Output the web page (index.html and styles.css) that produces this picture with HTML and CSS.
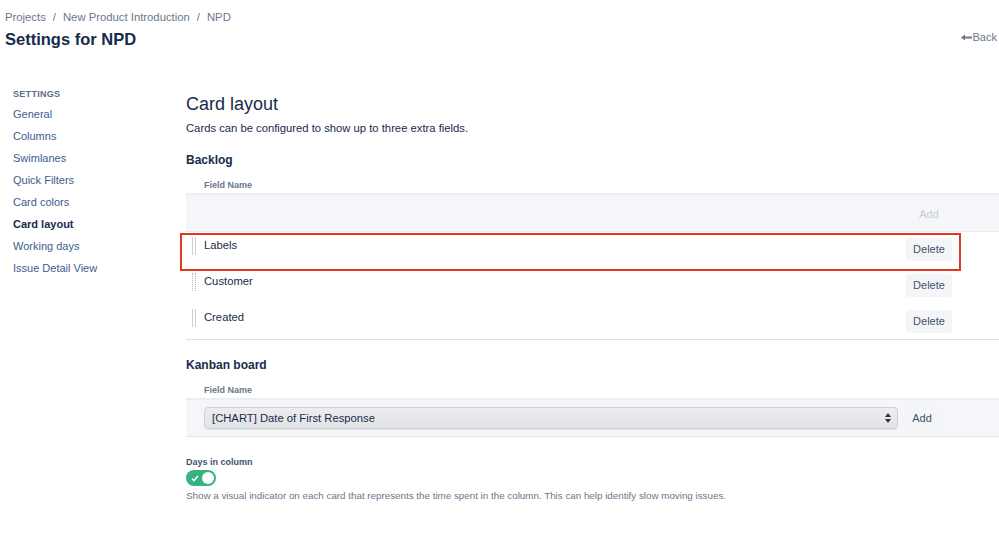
FILE: index.html
```html
<!DOCTYPE html>
<html>
<head>
<meta charset="utf-8">
<link rel="stylesheet" href="styles.css">
</head>
<body>
<header class="page-header">
  <div class="header-left">
    <nav class="breadcrumbs">
      <a>Projects</a><span class="sep">/</span><a>New Product Introduction</a><span class="sep">/</span><a>NPD</a>
    </nav>
    <h1 class="page-title">Settings for NPD</h1>
  </div>
  <a class="back-link">
    <svg width="11" height="7" viewBox="0 0 11 7"><path d="M0 3.5 L4 0.5 L4 2.5 L11 2.5 L11 4.5 L4 4.5 L4 6.5 Z" fill="#6b778c"/></svg>Back</a>
</header>
<div class="layout">
  <aside class="sidebar">
    <div class="sidebar-title">SETTINGS</div>
    <a class="side-link">General</a>
    <a class="side-link">Columns</a>
    <a class="side-link">Swimlanes</a>
    <a class="side-link">Quick Filters</a>
    <a class="side-link">Card colors</a>
    <a class="side-link active">Card layout</a>
    <a class="side-link">Working days</a>
    <a class="side-link">Issue Detail View</a>
  </aside>
  <main class="main">
    <h2 class="section-title">Card layout</h2>
    <p class="intro">Cards can be configured to show up to three extra fields.</p>

    <h3 class="sub-title">Backlog</h3>
    <div class="field-table">
      <div class="th-row"><span class="th">Field Name</span></div>
      <div class="add-row">
        <div class="cell-name"></div>
        <div class="cell-action"><span class="btn-disabled">Add</span></div>
      </div>
      <div class="field-row highlighted">
        <div class="cell-name"><span class="handle"></span>Labels</div>
        <div class="cell-action"><button class="btn">Delete</button></div>
        <div class="annotation"></div>
      </div>
      <div class="field-row">
        <div class="cell-name"><span class="handle dotted"></span>Customer</div>
        <div class="cell-action"><button class="btn">Delete</button></div>
      </div>
      <div class="field-row last">
        <div class="cell-name"><span class="handle"></span>Created</div>
        <div class="cell-action"><button class="btn">Delete</button></div>
      </div>
    </div>

    <h3 class="sub-title kanban">Kanban board</h3>
    <div class="field-table">
      <div class="th-row"><span class="th">Field Name</span></div>
      <div class="select-row">
        <div class="select">
          <span>[CHART] Date of First Response</span>
          <svg class="updown" width="6" height="10" viewBox="0 0 6 10"><path d="M3 0 L6 4 L0 4 Z M3 10 L6 6 L0 6 Z" fill="#333"/></svg>
        </div>
        <button class="btn add-btn">Add</button>
      </div>
    </div>

    <div class="toggle-block">
      <div class="toggle-label">Days in column</div>
      <div class="toggle">
        <svg class="check" width="8" height="7" viewBox="0 0 8 7"><path d="M1 3.5 L3 5.5 L7 1" stroke="#fff" stroke-width="1.6" fill="none"/></svg>
        <span class="knob"></span>
      </div>
      <p class="toggle-desc">Show a visual indicator on each card that represents the time spent in the column. This can help identify slow moving issues.</p>
    </div>
  </main>
</div>
</body>
</html>
```

FILE: styles.css
```css
* { box-sizing: border-box; }
html, body { margin: 0; padding: 0; background: #fff; }
body {
  font-family: "Liberation Sans", Arial, sans-serif;
  color: #172b4d;
  width: 999px;
  height: 537px;
  overflow: hidden;
}
a { text-decoration: none; cursor: pointer; }

.page-header {
  display: flex;
  justify-content: space-between;
  align-items: flex-end;
  padding: 10px 2px 0 5px;
}
.breadcrumbs {
  font-size: 11.3px;
  line-height: 14px;
  color: #6b778c;
}
.breadcrumbs .sep { margin: 0 7px; }
.page-title {
  margin: 4px 0 0;
  font-size: 16.5px;
  line-height: 22px;
  font-weight: 700;
  color: #172b4d;
}
.back-link {
  display: flex;
  align-items: center;
  gap: 1px;
  font-size: 11px;
  color: #6b778c;
  margin-bottom: 7px;
}

.layout {
  display: flex;
  margin-top: 35px;
}
.sidebar {
  width: 186px;
  flex: none;
  padding-left: 13px;
  display: flex;
  flex-direction: column;
}
.sidebar-title {
  font-size: 9px;
  font-weight: 700;
  letter-spacing: 0.3px;
  color: #5e6c84;
  line-height: 12px;
  margin-top: 3px;
  margin-bottom: 3px;
}
.side-link {
  font-size: 11px;
  line-height: 22px;
  color: #3b5e91;
}
.side-link.active { color: #172b4d; font-weight: 700; }

.main { flex: 1; min-width: 0; }
.section-title {
  margin: 8px 0 0;
  font-size: 18px;
  line-height: 22px;
  font-weight: 500;
}
.intro {
  margin: 6px 0 0;
  font-size: 11.25px;
  line-height: 14px;
  color: #172b4d;
}
.sub-title {
  margin: 17px 0 0;
  font-size: 12px;
  line-height: 16px;
  font-weight: 700;
}
.sub-title.kanban { margin-top: 17px; }

.field-table { width: 813px; }
.th-row {
  padding: 9px 0 2px 18px;
  border-bottom: 2px solid #ebeef3;
  line-height: 12px;
}
.th {
  font-size: 9px;
  font-weight: 700;
  color: #6b778c;
}
.add-row {
  display: flex;
  height: 37px;
  background: #f4f6fa;
  border-bottom: 1px solid #e6e9ee;
  align-items: center;
}
.cell-name { flex: 1; position: relative; padding-left: 18px; }
.cell-action { width: 93px; flex: none; }
.btn-disabled {
  display: inline-block;
  width: 46px;
  text-align: center;
  font-size: 11px;
  color: #c8ccd3;
  margin-top: 2px;
}
.field-row {
  display: flex;
  height: 36px;
  padding-top: 5px;
  align-items: flex-start;
  position: relative;
  font-size: 11.25px;
  line-height: 16px;
  color: #172b4d;
}
.field-row .cell-action { margin-top: 1px; }
.field-row.last { border-bottom: 1px solid #dfe1e6; }
.handle {
  position: absolute;
  left: 6px;
  top: 0;
  width: 4px;
  height: 18px;
  border-left: 1px solid #c9ccd2;
  border-right: 1px solid #c9ccd2;
}
.handle.dotted {
  border-left: 1px dotted #b9bdc4;
  border-right: 1px dotted #b9bdc4;
}
.btn {
  font-family: inherit;
  font-size: 11px;
  color: #42526e;
  background: #f4f5f7;
  border: none;
  border-radius: 3px;
  width: 46px;
  height: 23px;
  padding: 0;
  line-height: 23px;
}
.annotation {
  position: absolute;
  left: -6px;
  top: 1px;
  width: 781px;
  height: 38px;
  border: 2px solid #e2381f;
  pointer-events: none;
}

.select-row {
  display: flex;
  align-items: center;
  height: 37px;
  background: #f4f6fa;
  border-bottom: 1px solid #e2e6ee;
  padding-left: 18px;
  gap: 6px;
}
.select {
  width: 694px;
  height: 22px;
  display: flex;
  align-items: center;
  justify-content: space-between;
  padding: 0 6px 0 7px;
  font-size: 11.25px;
  color: #172b4d;
  background: linear-gradient(#ededee, #e2e3e5);
  border: 1px solid #cfd2d6;
  border-radius: 4px;
  box-shadow: 0 1px 1px rgba(0,0,0,0.08);
}
.add-btn { width: 36px; }

.toggle-block { margin-top: 19px; }
.toggle-label {
  font-size: 9px;
  font-weight: 700;
  color: #42526e;
  line-height: 12px;
}
.toggle {
  margin-top: 2px;
  width: 30px;
  height: 16px;
  border-radius: 8px;
  background: #36b37e;
  position: relative;
  display: flex;
  align-items: center;
}
.check { position: absolute; left: 5px; top: 4.5px; }
.knob {
  position: absolute;
  right: 2px;
  top: 2px;
  width: 12px;
  height: 12px;
  border-radius: 50%;
  background: #fff;
}
.toggle-desc {
  margin: 4px 0 0;
  font-size: 9.8px;
  line-height: 12px;
  color: #6b778c;
}
```
